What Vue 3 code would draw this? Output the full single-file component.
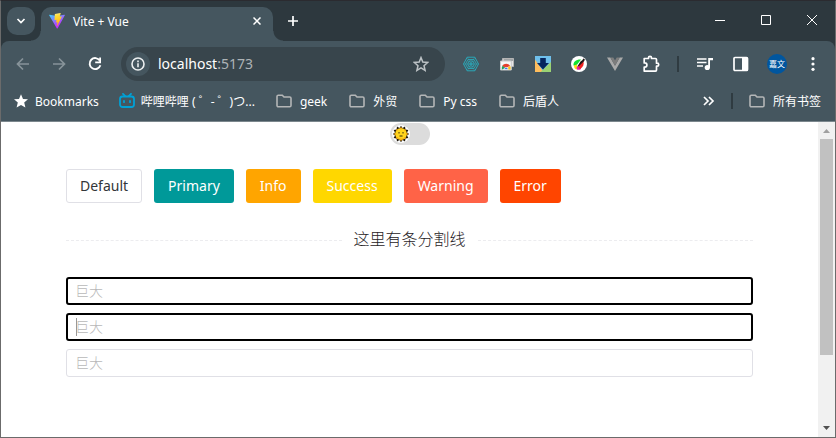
<script setup>
import { ref } from 'vue'

const folders = ['geek', '外贸', 'Py css', '后盾人']
const buttons = [
  { label: 'Default', type: 'default' },
  { label: 'Primary', type: 'primary' },
  { label: 'Info', type: 'info' },
  { label: 'Success', type: 'success' },
  { label: 'Warning', type: 'warning' },
  { label: 'Error', type: 'error' }
]
const inputs = ref([
  { value: '', state: 'active' },
  { value: '', state: 'active caret' },
  { value: '', state: '' }
])
const dark = ref(false)
</script>

<template>
  <div class="window">
    <header class="titlebar">
      <button class="tab-search" aria-label="Search tabs">
        <svg width="10" height="6" viewBox="0 0 10 6"><path d="M1.500 1l3.500 3.500L8.500 1" fill="none" stroke="#fff" stroke-width="1.700" /></svg>
      </button>
      <div class="tab">
        <svg width="16" height="16" viewBox="0 0 32 32">
          <defs>
            <linearGradient id="viteBody" x1="0" y1="0" x2="0.600" y2="1"><stop offset="0" stop-color="#41d1ff" /><stop offset="0.800" stop-color="#bd34fe" /></linearGradient>
            <linearGradient id="viteBolt" x1="0.400" y1="0" x2="0.600" y2="1"><stop offset="0" stop-color="#ffea83" /><stop offset="0.200" stop-color="#ffdd35" /><stop offset="1" stop-color="#ffa800" /></linearGradient>
          </defs>
          <path d="M31.700 4.700L17.100 30.800c-.3.500-1 .5-1.300 0L.3 4.700C0 4.100.5 3.400 1.200 3.600L16 6.200l14.800-2.600c.7-.1 1.200.500.9 1.100z" fill="url(#viteBody)" />
          <path d="M22.500 0L12 2.200c-.2 0-.3.200-.3.300l-.7 11.400c0 .3.200.500.5.4l3-.7c.3-.1.500.2.500.5l-.9 4.400c-.1.300.2.500.5.4l1.900-.6c.3-.1.600.2.500.5L15.600 25.700c-.1.400.5.700.7.300l9.300-18.500c.2-.3-.1-.6-.5-.5l-3.100.6c-.3.100-.5-.2-.5-.5l2-6.600c.1-.3-.2-.6-.5-.5z" fill="url(#viteBolt)" />
        </svg>
        <span class="tab-title">Vite + Vue</span>
        <button class="tab-close" aria-label="Close tab">
          <svg width="8" height="8" viewBox="0 0 8 8"><path d="M.5.5l7 7M7.500.5l-7 7" stroke="#fff" stroke-width="1.500" /></svg>
        </button>
      </div>
      <button class="new-tab" aria-label="New tab">
        <svg width="10" height="10" viewBox="0 0 10 10"><path d="M5 0v10M0 5h10" stroke="#fff" stroke-width="1.700" /></svg>
      </button>
      <div class="caption">
        <button aria-label="Minimize"><svg width="10" height="10" viewBox="0 0 10 10"><path d="M0 5.500h10" stroke="#fff" /></svg></button>
        <button aria-label="Maximize"><svg width="10" height="10" viewBox="0 0 10 10"><path d="M.5.5h9v9h-9z" fill="none" stroke="#fff" /></svg></button>
        <button aria-label="Close"><svg width="10" height="10" viewBox="0 0 10 10"><path d="M0 0l10 10M10 0L0 10" stroke="#fff" /></svg></button>
      </div>
    </header>

    <div class="chrome">
      <nav class="toolbar">
        <button aria-label="Back"><svg width="16" height="16" viewBox="0 0 16 16"><path d="M14 8H3M8 2.500L2.500 8 8 13.500" fill="none" stroke="#87939a" stroke-width="1.700" /></svg></button>
        <button aria-label="Forward"><svg width="16" height="16" viewBox="0 0 16 16"><path d="M2 8h11M8 2.500L13.500 8 8 13.500" fill="none" stroke="#87939a" stroke-width="1.700" /></svg></button>
        <button aria-label="Reload"><svg width="16" height="16" viewBox="0 0 16 16"><path d="M12.800 4.600A5.500 5.500 0 1 0 13.400 9.300" fill="none" stroke="#fff" stroke-width="1.900" /><path d="M14 1.500v5.800H8.200V5.500h4V1.500z" fill="#fff" /></svg></button>
        <div class="omnibox">
          <button class="site-info" aria-label="Site information">
            <svg width="14" height="14" viewBox="0 0 14 14"><circle cx="7" cy="7" r="6" fill="none" stroke="#eceff0" stroke-width="1.600" /><path d="M7 6.200v4.100M7 3.600v1.700" stroke="#eceff0" stroke-width="1.600" /></svg>
          </button>
          <span class="url">localhost<span class="port">:5173</span></span>
          <button class="bookmark" aria-label="Bookmark this page">
            <svg width="16" height="16" viewBox="0 0 16 16"><path d="M8 1.600l1.800 4.500 4.900.400-3.700 3.200 1.100 4.700L8 11.900l-4.100 2.500L5 9.700 1.300 6.500l4.900-.4z" fill="none" stroke="#bcc2c5" stroke-width="1.500" /></svg>
          </button>
        </div>
        <button aria-label="Web extension">
          <svg width="16" height="16" viewBox="0 0 16 16" fill="none" stroke="#2ba8b8"><path d="M4.200 1.200h7.600L15.500 8l-3.700 6.800H4.200L.5 8z" stroke-width="1" /><path d="M5 3.500h6L13.500 8 11 12.500H5L2.500 8z" stroke-width=".9" /><circle cx="8" cy="8" r="3.200" /><circle cx="8" cy="8" r="1.200" /><path d="M.5 8h15M4.200 1.200l7.600 13.600M11.800 1.200L4.200 14.800" stroke-width=".5" /></svg>
        </button>
        <button aria-label="Tab capture">
          <svg width="16" height="16" viewBox="0 0 16 16"><path d="M3.500 2.500h11v8h-11z" fill="#e6e6e6" stroke="#b5b5b5" /><path d="M4.500 4h9.500" stroke="#5b6266" /><path d="M1.500 5h10.800v9H1.500z" fill="#f6f6f6" stroke="#c8c8c8" /><path d="M2.800 13.500a4.500 4.500 0 0 1 1-4L7 12z" fill="#27a05a" /><path d="M3.300 9.800a4.500 4.500 0 0 1 7.700 0L7 12z" fill="#e5402d" /><path d="M11 9.800c.7 1 .9 2.500.4 3.700H7z" fill="#fbc116" /><path d="M5 13.500a2 2 0 0 1 4.200 0z" fill="#3979e8" stroke="#fff" stroke-width=".6" /></svg>
        </button>
        <button aria-label="Image downloader">
          <svg width="16" height="16" viewBox="0 0 16 16"><path d="M0 0h16v16H0z" fill="#6fc0ec" /><path d="M0 3.500L8.500 16H0z" fill="#ffbd5c" /><path d="M16 6v10H5.500z" fill="#9bd273" /><path d="M5.200 2h5.600v5H14l-6 6.500L2 7h3.200z" fill="#06265e" /></svg>
        </button>
        <button aria-label="Color picker">
          <svg width="16" height="16" viewBox="0 0 16 16"><circle cx="8" cy="8" r="8" fill="#fff" /><path d="M2.500 9.500C2 6 5 3.300 10 3.500L5 10z" fill="#12e231" /><path d="M3 9.500l3-1 .5 5C4 13.500 3 12 3 9.500z" fill="#ffd91a" /><path d="M5.500 11.500L9 9l1 4c-1.500 1-3 1-4 .5z" fill="#f013a8" /><path d="M7 10l5.500-5c.8 3.500-.5 6.500-3.500 8z" fill="#f02222" /><path d="M6 11l3.500-5.500 2-1.500.8-1.500 1.500.8-.5 1.700L8.500 9.500z" fill="#221414" /></svg>
        </button>
        <button aria-label="Vue devtools">
          <svg width="16" height="16" viewBox="0 0 16 16"><path d="M0 1.500h3.300L8 9.700l4.700-8.200H16L8 15z" fill="#aaa" /><path d="M3.300 1.500h3L8 4.400l1.700-2.900h3L8 9.700z" fill="#7d7d7d" /></svg>
        </button>
        <button aria-label="Extensions">
          <svg width="18" height="18" viewBox="0 0 18 18"><path d="M2.200 3.500h4.300V2.800a1.500 1.500 0 0 1 3 0v.700h4a1 1 0 0 1 1 1v3.700h.7a1.500 1.500 0 0 1 0 3h-.7v3.900a1 1 0 0 1-1 1H2.200v-4h.600a2.100 2.100 0 0 0 0-4.200h-.6z" fill="none" stroke="#fff" stroke-width="1.700" stroke-linejoin="round" /></svg>
        </button>
        <span class="divider-cell"></span>
        <button aria-label="Media controls">
          <svg width="16" height="16" viewBox="0 0 16 16"><path d="M0 3h9.500M0 6.500h9.500M0 10h6" stroke="#fff" stroke-width="1.700" /><circle cx="10.300" cy="11.500" r="2.600" fill="#fff" /><path d="M11.200 2H16v2.200h-3v7.300h-1.800z" fill="#fff" /></svg>
        </button>
        <button aria-label="Side panel">
          <svg width="16" height="16" viewBox="0 0 16 16"><rect x="1" y="1.500" width="13.500" height="13" rx="1" fill="none" stroke="#fff" stroke-width="1.700" /><path d="M9 1.500h5.500v13H9z" fill="#fff" /></svg>
        </button>
        <button aria-label="Profile"><span class="avatar">嘉文</span></button>
        <button aria-label="Menu">
          <svg width="4" height="14" viewBox="0 0 4 14" fill="#fff"><circle cx="2" cy="1.700" r="1.600" /><circle cx="2" cy="7" r="1.600" /><circle cx="2" cy="12.300" r="1.600" /></svg>
        </button>
      </nav>

      <nav class="bookmarks">
        <a class="favorite" href="#">
          <svg width="16" height="16" viewBox="0 0 16 16"><path d="M8 1.200l2 4.700 5 .4-3.800 3.300 1.200 5L8 12l-4.400 2.600 1.200-5L1 6.300l5-.4z" fill="#fff" /></svg>
          Bookmarks
        </a>
        <a class="favorite" href="#">
          <svg width="16" height="16" viewBox="0 0 16 16" fill="none" stroke="#00a1d6" stroke-width="1.800" stroke-linecap="round"><rect x="1" y="3.500" width="14" height="10.500" rx="2.500" /><path d="M4 .9l2 2M12 .9l-2 2M5 7.800v1.400M11 7.800v1.400" /></svg>
          哔哩哔哩 ( ゜- ゜)つ...
        </a>
        <a v-for="name in folders" :key="name" class="folder" href="#">
          <svg width="16" height="14" viewBox="0 0 16 14"><path d="M1 11.500v-9a1.300 1.300 0 0 1 1.300-1.300h4L8 3h5.700A1.300 1.300 0 0 1 15 4.300v7.200a1.300 1.300 0 0 1-1.300 1.300H2.300A1.300 1.300 0 0 1 1 11.500z" fill="none" stroke="#b4b6b7" stroke-width="1.600" /></svg>
          {{ name }}
        </a>
        <button class="overflow" aria-label="More bookmarks">
          <svg width="12" height="10" viewBox="0 0 12 10"><path d="M1 1l4 4-4 4M6 1l4 4-4 4" fill="none" stroke="#fff" stroke-width="1.700" /></svg>
        </button>
        <span class="bar"></span>
        <a class="folder" href="#">
          <svg width="16" height="14" viewBox="0 0 16 14"><path d="M1 11.500v-9a1.300 1.300 0 0 1 1.300-1.300h4L8 3h5.700A1.300 1.300 0 0 1 15 4.300v7.200a1.300 1.300 0 0 1-1.300 1.300H2.300A1.300 1.300 0 0 1 1 11.500z" fill="none" stroke="#b4b6b7" stroke-width="1.600" /></svg>
          所有书签
        </a>
      </nav>
    </div>

    <div class="viewport">
      <main class="page">
        <button class="switch" role="switch" :aria-checked="dark" aria-label="Theme" @click="dark = !dark">
          <svg width="18" height="18" viewBox="0 0 18 18">
            <circle cx="9" cy="9" r="9" fill="#fff" />
            <path d="M9 .8l1.500 2.200 2.500-1.400.5 2.900 2.900.5L15 7.500 17.200 9 15 10.500l1.400 2.500-2.900.5-.5 2.900-2.500-1.400L9 17.200 7.500 15 5 16.400l-.5-2.900-2.900-.5L3 10.500.8 9 3 7.500 1.600 5l2.900-.5L5 1.600 7.500 3z" fill="#20190d" />
            <circle cx="9" cy="9" r="5.900" fill="#ffd51c" />
            <path d="M9 2.200v2M9 13.800v2M2.200 9h2M13.800 9h2M4.400 4.400l1 1M13.600 4.400l-1 1M4.400 13.600l1-1M13.600 13.600l-1-1" stroke="#f6a81a" stroke-width="1.400" />
            <path d="M5 12.400a5.300 5.300 0 0 0 8 0" fill="none" stroke="#f5ac18" stroke-width="1" />
            <path d="M7 7v1.500M11 7v1.500M7.500 11h3" stroke="#3a2a0c" />
          </svg>
        </button>
        <div class="buttons">
          <button v-for="b in buttons" :key="b.type" class="btn" :class="b.type">{{ b.label }}</button>
        </div>
        <div class="separator"><span>这里有条分割线</span></div>
        <div class="fields">
          <label v-for="(field, i) in inputs" :key="i" class="field" :class="field.state">
            <input v-model="field.value" type="text" placeholder="巨大" aria-label="巨大" />
          </label>
        </div>
      </main>
      <div class="scrollbar">
        <svg width="17" height="17" viewBox="0 0 17 17"><path d="M5 11l3.500-4 3.500 4z" fill="#a0a0a0" /></svg>
        <div class="track"><div class="thumb"></div></div>
        <svg width="17" height="17" viewBox="0 0 17 17"><path d="M5 6l3.500 4L12 6z" fill="#505050" /></svg>
      </div>
    </div>
  </div>
</template>

<style>
body {
  background: #fff;
}
</style>

<style scoped>
.window {
  display: flex;
  flex-direction: column;
  box-sizing: border-box;
  min-height: 100vh;
  border: 1px solid #6b6b6b;
  border-top-color: #2b2b30;
  background: #2d383e;
  color: #fff;
  font-family: "Noto Sans", "Noto Sans CJK SC", sans-serif;
  font-size: 12px;
}
button {
  display: flex;
  align-items: center;
  justify-content: center;
  margin: 0;
  padding: 0;
  border: 0;
  background: none;
  color: inherit;
  font: inherit;
}
svg {
  display: block;
  flex: none;
}
.titlebar {
  display: flex;
  height: 40px;
  padding-left: 6px;
}
.tab-search {
  width: 28px;
  height: 28px;
  margin: 6px 6px 0 0;
  border-radius: 10px;
  background: #45565f;
}
.tab {
  position: relative;
  display: flex;
  align-items: center;
  box-sizing: border-box;
  width: 232px;
  height: 34px;
  margin-top: 6px;
  padding: 0 8px 6px;
  border-radius: 10px 10px 0 0;
  background: #45565f;
}
.tab::before,
.tab::after {
  content: "";
  position: absolute;
  bottom: 0;
  width: 10px;
  height: 10px;
}
.tab::before {
  right: 100%;
  background: radial-gradient(circle at 0 0, transparent 9px, #45565f 10px);
}
.tab::after {
  left: 100%;
  background: radial-gradient(circle at 100% 0, transparent 9px, #45565f 10px);
}
.tab-title {
  flex: 1;
  margin-left: 8px;
}
.tab-close {
  width: 16px;
  height: 16px;
}
.new-tab {
  width: 28px;
  height: 28px;
  margin: 6px 0 0 6px;
}
.caption {
  display: flex;
  margin-left: auto;
}
.caption button {
  width: 46px;
  height: 38px;
}
.chrome {
  border-bottom: 1px solid #7b878d;
  border-radius: 8px 8px 0 0;
  background: #45565f;
}
.toolbar {
  display: flex;
  align-items: center;
  height: 46px;
  padding: 0 4px;
}
.toolbar > button {
  flex: none;
  width: 36px;
  height: 34px;
}
.omnibox {
  display: flex;
  flex: 1;
  align-items: center;
  box-sizing: border-box;
  height: 34px;
  margin: 0 8px;
  padding: 0 12px 0 5px;
  border-radius: 17px;
  background: #38454c;
}
.site-info {
  width: 24px;
  height: 24px;
  border-radius: 50%;
  background: #45565f;
}
.url {
  flex: 1;
  margin-left: 8px;
  padding-bottom: 2px;
  font-size: 14px;
}
.port {
  color: #adb3b6;
}
.bookmark {
  width: 24px;
  height: 24px;
}
.divider-cell {
  flex: none;
  width: 2px;
  height: 16px;
  margin: 0 8px;
  background: #2f3b41;
}
.avatar {
  width: 20px;
  height: 20px;
  border-radius: 50%;
  background: #00569f;
  font-size: 8px;
  line-height: 20px;
}
.bookmarks {
  display: flex;
  align-items: center;
  height: 34px;
  padding: 0 14px 6px 12px;
  box-sizing: border-box;
  gap: 22px;
}
.bookmarks a {
  display: flex;
  align-items: center;
  color: inherit;
  text-decoration: none;
  white-space: nowrap;
}
.favorite {
  gap: 6px;
}
.favorite + .favorite {
  margin: 0 -1px 0 -2px;
}
.folder {
  gap: 8px;
}
.overflow {
  margin-left: auto;
}
.bar {
  width: 2px;
  height: 16px;
  margin: 0 -6px;
  background: #2f3b41;
}
.viewport {
  display: flex;
  flex: 1;
  background: #fff;
}
.page {
  flex: 1;
  padding: 1px 65px 60px;
}
.switch {
  justify-content: flex-start;
  width: 40px;
  height: 22px;
  margin: 0 auto;
  padding: 0 2px;
  border-radius: 11px;
  background: #dcdcdc;
}
.buttons {
  display: flex;
  flex-wrap: wrap;
  gap: 12px;
  margin-top: 24px;
}
.btn {
  height: 34px;
  padding: 0 13px 2px;
  border: 1px solid transparent;
  border-radius: 3px;
  font-size: 14px;
}
.default {
  border-color: #e0e0e6;
  color: #333639;
}
.primary {
  background: #009999;
}
.info {
  background: #ffa500;
}
.success {
  background: #ffd700;
}
.warning {
  background: #ff6347;
}
.error {
  background: #ff4500;
}
.separator {
  display: flex;
  align-items: center;
  gap: 12px;
  height: 26px;
  margin: 24px 0;
  color: #1f2225;
  font-size: 16px;
  font-weight: 300;
  line-height: 24px;
}
.separator span {
  padding-bottom: 2px;
}
.separator::before,
.separator::after {
  content: "";
  flex: 1;
  border-top: 1px dashed #ececef;
}
.fields {
  display: flex;
  flex-direction: column;
  gap: 8px;
}
.field {
  position: relative;
  display: block;
  box-sizing: border-box;
  height: 28px;
  border: 1px solid #e0e0e6;
  border-radius: 3px;
}
.field input {
  display: block;
  box-sizing: border-box;
  width: 100%;
  height: 26px;
  padding: 0 8px 2px;
  border: 0;
  outline: 0;
  background: none;
  color: #333639;
  font: inherit;
  font-size: 14px;
}
.field input::placeholder {
  color: #b8b8b8;
  font-weight: 300;
}
.active {
  border: 2px solid #000;
}
.active input {
  height: 24px;
  padding: 0 7px 2px;
}
.caret::after {
  content: "";
  position: absolute;
  top: 3px;
  left: 8px;
  width: 1px;
  height: 18px;
  background: #999;
}
.scrollbar {
  display: flex;
  flex-direction: column;
  width: 17px;
  background: #f1f1f1;
}
.track {
  flex: 1;
  padding: 0 2px;
}
.thumb {
  height: 77%;
  background: #c1c1c1;
}
</style>
